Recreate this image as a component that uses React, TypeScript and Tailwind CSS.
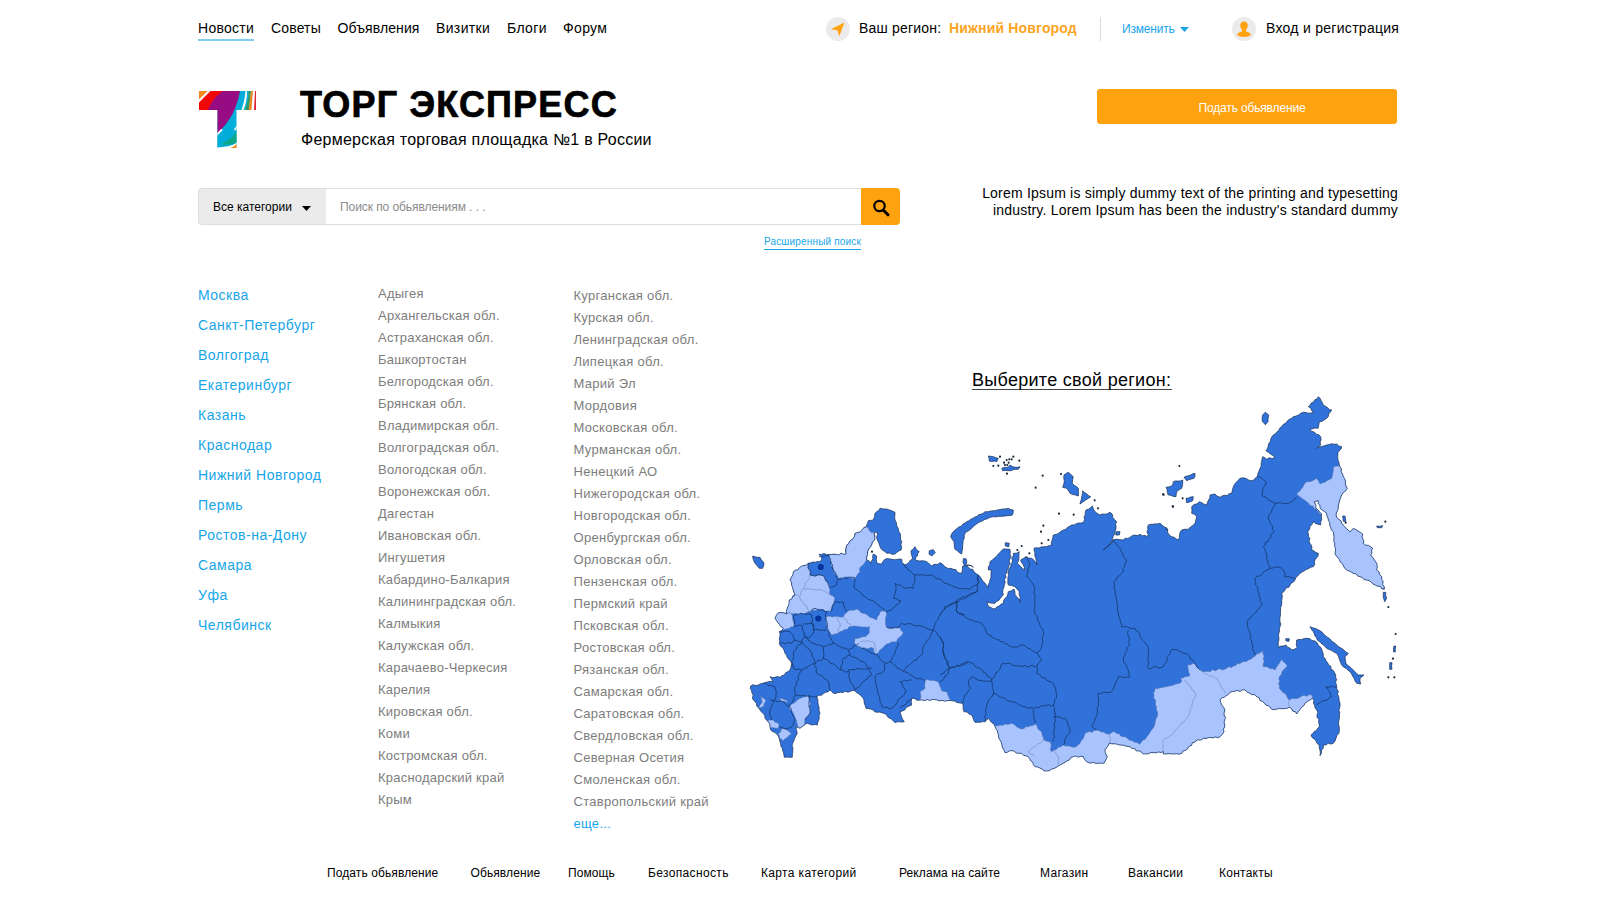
import React from "react";

type Tile = { x: number; y: number; s: number };

/* Map sheets: every outline is listed in the local units of its sheet. */
const TILES: Record<string, Tile> = {
  M: { x: 0, y: 0, s: 1 },
  W: { x: 740, y: 480, s: 1 / 3 },
  K: { x: 930, y: 350, s: 1 / 3 },
  N: { x: 1160, y: 380, s: 1 / 3 },
  S: { x: 940, y: 560, s: 1 / 3 },
  E: { x: 1160, y: 560, s: 1 / 3 },
};

type Pt = [number, number];

function parse(src: string): Pt[] {
  let tile = TILES.M;
  const out: Pt[] = [];
  for (const token of src.trim().split(/\s+/)) {
    if (TILES[token]) {
      tile = TILES[token];
      continue;
    }
    const [a, b] = token.split(",").map(Number);
    out.push([tile.x + a * tile.s, tile.y + b * tile.s]);
  }
  return out;
}

function noise(x: number, y: number) {
  const v = Math.sin(x * 12.9898 + y * 78.233) * 43758.5453;
  return (v - Math.floor(v)) * 2 - 1;
}

/* Splits long segments into short wiggly ones so that borders look natural. */
function wiggle(a: Pt, b: Pt, amp: number): Pt[] {
  const dx = b[0] - a[0];
  const dy = b[1] - a[1];
  const len = Math.hypot(dx, dy);
  const n = Math.floor(len / 2.3);
  const pts: Pt[] = [];
  for (let i = 1; i < n; i++) {
    const x = a[0] + (dx * i) / n;
    const y = a[1] + (dy * i) / n;
    const k = noise(Math.round(x), Math.round(y)) * amp;
    pts.push([x - (dy / len) * k, y + (dx / len) * k]);
  }
  pts.push(b);
  return pts;
}

function line(src: string, closed = false, amp = 0.95) {
  const pts = parse(src);
  if (closed) pts.push(pts[0]);
  const out: Pt[] = [pts[0]];
  for (let i = 1; i < pts.length; i++) out.push(...wiggle(pts[i - 1], pts[i], amp));
  return "M" + out.map((p) => p[0].toFixed(1) + " " + p[1].toFixed(1)).join("L") + (closed ? "Z" : "");
}

const MAINLAND = `W 237,223 318,222 320,195 340,175 345,160 362,155 378,140 385,122 400,120 405,100 420,85 440,87 465,97 465,120 475,145 485,185 483,210
465,222 440,220 422,205 412,180 410,155 403,160 404,180 395,195 383,215 380,240 393,250 400,222 410,228 410,248 425,252 435,238 485,238
492,255 518,237 513,212 525,200 538,215 525,240 560,245 575,258 600,248 612,258 640,268 665,280 668,258 685,255 700,262
S 80,15 115,45 145,82 150,60 155,30 K 175,660 180,635 205,612 220,597 240,598 243,620 232,660
S 200,30 192,80 190,105 165,130 140,125 145,140 165,147 190,130 205,95 222,87 230,110 240,128 238,95 225,80 205,75 205,40 213,12
K 245,640 250,610 268,605 262,640 285,660 272,630 290,620 305,625 322,645 312,595 340,590 365,585 370,555 400,540 425,525 462,515 468,480 487,468
495,485 510,495 540,487 560,515 555,545 542,580 520,600 555,568 580,570 605,558 630,553 652,560 655,525 690,520 712,540
N 18,442 28,465 55,480 65,450 85,448 105,430 110,410 95,400 95,380 118,365 140,375 150,345 165,342 180,352 215,340 220,320 240,295 260,296 275,302 292,290 300,265 308,230
320,238 345,232 318,212 340,165 365,140 400,110 430,97 462,97 445,80 475,50 490,75 515,90 500,115 478,125 474,145 450,148 482,170 482,195 470,205 500,195 530,192
545,200 533,225 540,260 550,290 562,325 545,345 535,385 528,405 545,430 570,455 580,445 608,462 610,490 638,505 632,525 650,550 650,570 665,590 673,628
600,590 560,570 525,520 522,470 500,400 480,385 475,362 463,365 468,385 485,402 482,435 460,425 443,455 455,510 475,520 460,560 420,580 405,600 365,640
E 360,200 355,262 378,255 395,270 412,262 410,240 440,235 465,243 482,262 490,290 527,345 530,380 540,430 537,520 520,550 490,555 480,587 478,555 453,525 478,500
470,450 458,415 435,430 410,462 388,442 335,448 290,410 255,390 210,397 180,420 195,450 192,515 180,530 110,540 65,580 10,582
S 670,575 610,582 570,560 508,550 495,570 502,590 492,610 445,608 430,590 400,590 355,618 320,633 285,620 265,590 215,572 195,578 180,540 165,500 148,475
135,485 105,487 95,465 72,455 68,430 W 635,662 540,660 515,655 515,675 480,695 493,725 465,728 440,705 378,685 372,660 345,632 280,640 270,630
230,650 235,675 240,700 232,735 200,730 180,745 168,740 172,760 158,790 157,832 133,832 120,785 115,768 92,750 85,725 60,690 40,660 32,618
70,610 100,605 90,590 120,592 150,570 155,550 135,520 118,490 118,455 130,445 105,415 115,398 140,402 148,360 165,345 150,300 160,275 205,250
240,245 245,232`;

const LIGHT = [
  "W 266,226 318,215 320,195 340,170 345,155 362,150 378,140 395,158 404,155 404,180 395,195 383,215 380,240 362,260 360,275 345,298 325,292 295,297 280,270",
  "W 205,250 210,285 250,287 268,315 272,345 285,355 272,395 235,388 212,395 190,402 140,402 120,370 165,345 130,300 160,260",
  "W 95,415 115,390 155,402 162,440 130,450",
  "W 257,412 285,408 310,410 325,392 350,387 370,400 410,420 420,395 438,395 437,425 440,442 480,443 490,458 470,485 440,492 420,510 408,523 400,505 365,505 343,488 345,475 375,470 388,458 388,440 360,440 335,440 300,455 275,465 262,440",
  "W 555,600 595,605 605,632 622,635 635,670 540,670 540,635 555,625",
  "W 148,680 180,655 205,645 210,665 210,700 195,720 195,750 175,750 165,715",
  "W 118,655 140,660 143,668 125,665",
  "W 80,722 100,720 118,735 115,745 85,745",
  "W 115,760 130,745 155,762 130,782 118,775",
  "W 60,645 78,662 70,680 52,686 66,668",
  `S 160,500 215,490 245,507 285,492 305,515 312,540 330,545 335,575 362,560 370,555 400,562 420,550 435,520 470,510 505,522 525,515 550,530 598,553 625,525
   645,490 652,455 640,400 645,385 700,375 725,365 722,355 750,345 742,315 760,310 E 130,335 200,325 265,300 310,272 310,320 345,330 365,298 382,318 358,350
   358,385 388,420 425,408 455,405 460,420 435,500 388,470 335,480 250,430 210,450 210,560 60,620 S 610,640 320,660 200,600 150,480`,
  "N 410,345 440,305 470,295 480,312 515,295 520,262 545,255 590,330 570,380 720,640 600,610 515,540 495,420 478,400 440,365",
];

const BORDERS = [
  "W 237,230 252,228 266,226",
  "W 266,226 280,270 295,297 290,315 272,322",
  "W 205,250 210,285 250,287 270,320",
  "W 295,297 325,292 345,293 342,320 375,350 415,375 435,390",
  "W 438,395 455,390 482,362 460,355 468,330 465,310 495,325 520,325 525,285 495,260 490,250",
  "W 525,285 570,285 640,320 690,328 715,310 S 115,45",
  "W 715,333 650,360 650,395 675,405",
  "W 650,365 615,380 585,430 580,450",
  "W 440,442 475,443 485,430 520,435 580,450 550,500 545,525 500,560 490,575",
  "W 580,450 610,485 612,520 628,560 625,580 600,605",
  "W 475,487 465,520 450,545",
  "W 272,395 285,365 310,365 320,395",
  "W 212,395 225,385 260,395 257,412 262,440 255,452 220,450 215,405 190,402 162,405 162,440",
  "W 118,455 150,455 165,480 185,485 195,470 185,435 165,440",
  "W 190,432 220,432 220,460 205,475 190,465",
  "W 120,490 155,490 165,480",
  "W 185,485 160,520 155,560",
  "W 185,485 215,520 228,550",
  "W 195,470 215,490 250,500 250,535 225,550",
  "W 262,450 275,480 280,490 250,500",
  "W 280,490 325,510 355,490",
  "W 325,510 330,525 310,535 300,570",
  "W 250,535 285,555 300,570 325,575",
  "W 330,525 370,545 395,580 375,600 345,630 330,600 325,570 395,565",
  "W 365,505 408,523 435,550 430,575 405,590 410,620 425,680 455,685 495,640 498,630 480,605 515,600",
  "W 435,550 450,545 490,575 520,590 555,602",
  "W 480,685 515,655",
  "W 155,550 160,565 185,570 225,550 230,580 265,605 270,630",
  "W 185,570 165,620 165,645 205,648 232,650",
  "W 70,610 105,620 108,650 90,690 95,720",
  "W 90,660 130,665 148,680 165,715 160,735 145,745 118,740",
  "W 165,645 148,680",
  "W 205,645 210,700 195,720",
  "W 628,565 680,550 S 85,305",
  "S 155,365 125,362 95,350 85,362 92,385 75,405 68,430",
  "S 0,165 20,140 50,125 110,95 112,75 115,45",
  "S 50,125 50,155 90,180 125,190 145,225 220,262 250,255 290,278",
  "K 285,620 300,640 290,680 S 262,50 285,85 282,150 310,215 305,260 290,278 305,300 290,318 290,340 340,370 350,405 340,435 345,475 340,545",
  "S 155,357 190,310 240,318 290,318",
  "S 0,345 30,325 85,305 120,325 155,357",
  "S 0,230 10,250 12,290 30,325",
  "S 155,357 160,400 215,425 262,445 340,435",
  "S 160,400 140,435 135,485",
  "S 280,448 285,490",
  "S 340,470 375,475 390,510 370,555",
  "K 550,568 590,630 575,670 S 545,40 522,65 530,130 545,200 585,205 625,265 625,325 670,320 695,268 740,280 780,330",
  "S 565,210 568,250 550,300 570,350 535,350 515,395 475,400 472,460 455,500 470,510",
  "N 292,290 318,305 305,345 345,370 385,370 410,350",
  "N 345,370 325,410 342,455 310,500 330,565 285,595 E 285,60 305,135 262,185 275,250 285,285",
  "N 330,565 350,560 370,570 375,590 405,595",
  "E 470,435 515,410 498,380 530,380",
];

const LIGHT_BORDERS = [
  "W 190,325 250,332 272,345",
  "W 165,345 178,350 210,395",
  "W 210,285 190,325 178,350",
  "W 285,408 300,430 295,455",
  "W 310,410 335,440",
  "W 360,485 400,485 408,515",
  "S 312,540 265,575 285,590",
  "S 340,570 355,590 355,615",
  "S 508,522 508,550",
  "S 735,360 768,405 745,470 700,520 670,540 670,575",
  "E 130,338 170,355 195,400",
  "E 388,420 388,442",
];

const ISLANDS = [
  "K 95,612 75,598 72,575 62,560 70,545 110,515 165,485 195,482 235,475 250,480 247,495 190,500 150,515 105,550 98,585",
  "K 402,375 415,367 430,380 427,400 445,415 445,438 420,430 410,415 398,412 402,400",
  "K 458,422 482,440 460,455 450,462 455,440",
  "K 558,545 570,545 568,555 557,555",
  "K 175,318 190,320 205,325 200,335 178,333",
  "K 215,355 235,352 240,345 255,352 270,350 265,358 235,362 218,362",
  "K 226,578 238,580 236,590 226,588",
  "W 38,228 50,232 60,232 72,250 68,265 58,265 45,250",
  "W 568,212 580,209 586,218 576,228 567,222",
  "W 670,236 678,236 680,250 675,258 669,248",
  "N 18,322 35,318 40,305 68,300 65,325 50,335 48,350 25,345",
  "N 72,292 105,280 102,295 80,302",
  "N 78,355 100,350 98,362 80,368",
  "N 308,105 316,97 326,105 324,125 316,134 307,124",
  "N 548,408 555,408 557,424 550,424",
  "N 650,438 668,437 665,443 652,443",
  "E 450,200 465,205 480,212 530,255 565,280 555,290 558,310 580,330 595,345 612,345 600,355 602,372 590,370 570,335 545,315 530,280 500,265 472,240 460,215",
  "E 670,97 677,97 680,115 674,125 670,112",
  "E 702,258 707,258 706,276 701,276",
  "E 689,308 696,308 696,328 689,328",
  "E 377,236 388,236 387,244 378,243",
];

const DOTS = `K 190,348 205,347 222,338 230,330 236,338 238,328 245,328 250,320 268,332 232,345 225,345 231,371 210,320 338,377 317,413 393,372 387,491 431,494
340,527 333,545 335,580 355,570 275,588 262,600 494,451 504,475 748,348 701,434 729,470 298,610
N 9,343 38,379 68,355 676,425 557,428 685,681 E 707,222 699,296 685,352 703,352 W 396,215`;

function RegionMap() {
  const land = line(MAINLAND, true, 0.85);
  return (
    <svg viewBox="740 390 670 390" className="h-[390px] w-[670px]" aria-label="Карта регионов">
      <defs>
        <clipPath id="land">
          <path d={land} />
        </clipPath>
      </defs>
      <path d={land} fill="#3072da" />
      <g clipPath="url(#land)">
        {LIGHT.map((d) => (
          <path key={d} d={line(d, true)} fill="#a9c3fe" stroke="#4b6da8" strokeWidth="0.6" />
        ))}
      </g>
      <g fill="none" stroke="#15366b" strokeWidth="0.8" strokeLinejoin="round">
        {BORDERS.map((d) => (
          <path key={d} d={line(d)} />
        ))}
      </g>
      <g fill="none" stroke="#7187b8" strokeWidth="0.6">
        {LIGHT_BORDERS.map((d) => (
          <path key={d} d={line(d)} />
        ))}
      </g>
      <path d={land} fill="none" stroke="#1c355f" strokeWidth="0.75" strokeLinejoin="round" />
      <g fill="#3072da" stroke="#1c355f" strokeWidth="0.75">
        {ISLANDS.map((d) => (
          <path key={d} d={line(d, true, 0.5)} />
        ))}
      </g>
      <g fill="#142234">
        {parse(DOTS).map(([x, y]) => (
          <circle key={x + "-" + y} cx={x} cy={y} r="1.05" />
        ))}
      </g>
      <circle cx="820.8" cy="567" r="3.1" fill="#06329b" />
      <circle cx="818.3" cy="618.5" r="3.1" fill="#06329b" />
    </svg>
  );
}

function Logo() {
  return (
    <svg viewBox="0 0 58 58" className="h-[58px] w-[58px]">
      <defs>
        <clipPath id="tee">
          <path d="M1 0H58V19H38.5V57H19.5V19H1Z" />
        </clipPath>
      </defs>
      <g clipPath="url(#tee)">
        <rect width="58" height="58" fill="#02add9" />
        <path d="M0 0H42C39 17 32 31 19 43V58H0Z" fill="#970b83" />
        <path d="M10 0H25C18 5 13 11 10 19H0V10Z" fill="#f00808" />
        <path d="M0 0H10L0 11Z" fill="#f28a1c" />
        <path d="M13 -2L-2 13" stroke="#fff" strokeWidth="2" />
        <path d="M19 43V58H30L27 35Z" fill="#02add9" />
        <path d="M19.5 42C22 40 24.500 37.500 27 34.500L29 37C26 39 23 41 19.500 44Z" fill="#02add9" />
        <path d="M18 44.500L24 38.500" stroke="#fff" strokeWidth="1.800" />
        <path d="M39 39C36 45 31 50 23 53C30 55 36 53 39 51Z" fill="#0aa889" />
        <path d="M19 56.500C27 56 34 55 39 51.500V58H19Z" fill="#fff" />
        <path d="M32 57C35 56 37 54.500 39 52.500V58H32Z" fill="#f28a1c" />
        <path d="M36.500 39L40 34" stroke="#fff" strokeWidth="1.500" />
        <path d="M47.500 0H58V19H43.500C45.500 13 47 7 47.500 0Z" fill="#fff" />
        <path d="M49 0H51C51 8 49 14 47 19H45.500C48 13 49 7 49 0Z" fill="#0bb0d4" />
        <path d="M50.500 0H53L51 19H47C49.500 12 50.500 7 50.500 0Z" fill="#279a63" />
        <path d="M53 0H55L53.500 19H50.500Z" fill="#e58a2a" />
        <path d="M57 0H58V19H56Z" fill="#df2338" />
      </g>
    </svg>
  );
}

const NAV = [
  { t: "Новости", w: "w-[73px] tracking-[0.28px]" },
  { t: "Советы", w: "w-[66.500px] tracking-[0.15px]" },
  { t: "Объявления", w: "w-[98.500px] tracking-[0.1px]" },
  { t: "Визитки", w: "w-[71px] tracking-[0.35px]" },
  { t: "Блоги", w: "w-[56px] tracking-[0.35px]" },
  { t: "Форум", w: "w-[60px] tracking-[0.35px]" },
];

const CITIES = [
  "Москва", "Санкт-Петербург", "Волгоград", "Екатеринбург", "Казань", "Краснодар",
  "Нижний Новгород", "Пермь", "Ростов-на-Дону", "Самара", "Уфа", "Челябинск",
];

const REGIONS_A = [
  "Адыгея", "Архангельская обл.", "Астраханская обл.", "Башкортостан", "Белгородская обл.",
  "Брянская обл.", "Владимирская обл.", "Волгоградская обл.", "Вологодская обл.",
  "Воронежская обл.", "Дагестан", "Ивановская обл.", "Ингушетия", "Кабардино-Балкария",
  "Калининградская обл.", "Калмыкия", "Калужская обл.", "Карачаево-Черкесия", "Карелия",
  "Кировская обл.", "Коми", "Костромская обл.", "Краснодарский край", "Крым",
];

const REGIONS_B = [
  "Курганская обл.", "Курская обл.", "Ленинградская обл.", "Липецкая обл.", "Марий Эл",
  "Мордовия", "Московская обл.", "Мурманская обл.", "Ненецкий АО", "Нижегородская обл.",
  "Новгородская обл.", "Оренбургская обл.", "Орловская обл.", "Пензенская обл.",
  "Пермский край", "Псковская обл.", "Ростовская обл.", "Рязанская обл.", "Самарская обл.",
  "Саратовская обл.", "Свердловская обл.", "Северная Осетия", "Смоленская обл.",
  "Ставропольский край",
];

const FOOTER = [
  { t: "Подать обьявление", w: "w-[143.500px]" },
  { t: "Обьявление", w: "w-[97.500px]" },
  { t: "Помощь", w: "w-[80px]" },
  { t: "Безопасность", w: "w-[113px] tracking-[0.35px]" },
  { t: "Карта категорий", w: "w-[138px] tracking-[0.35px]" },
  { t: "Реклама на сайте", w: "w-[141px]" },
  { t: "Магазин", w: "w-[88px] tracking-[0.3px]" },
  { t: "Вакансии", w: "w-[91px] tracking-[0.3px]" },
  { t: "Контакты", w: "w-[60px] tracking-[0.25px]" },
];

export default function App() {
  return (
    <div className="h-[900px] w-[1600px] overflow-hidden bg-white pl-[198px] font-['Liberation_Sans',Arial,sans-serif] text-black">
      <header className="flex h-[56px] items-start whitespace-nowrap pt-[17px] text-[14px] leading-[22px]">
        <nav className="flex w-[629px]">
          {NAV.map((n, i) => (
            <div key={n.t} className={n.w}>
              <a className={i === 0 ? "inline-block border-b-2 border-[#7fcdf0]" : "inline-block"}>{n.t}</a>
            </div>
          ))}
        </nav>
        <svg viewBox="0 0 24 24" className="-ml-px mr-px h-6 w-6">
          <circle cx="12" cy="12" r="12" fill="#ebebeb" />
          <path d="M18.500 5.500L13.200 19.500L11.500 13.200L4.800 12.200Z" fill="#fea210" />
        </svg>
        <span className="ml-2 w-[90px] tracking-[0.2px]">Ваш регион:</span>
        <span className="w-[151px] font-bold tracking-[0.16px] text-[#fba41f]">Нижний Новгород</span>
        <span className="h-6 w-px bg-[#dcdcdc]" />
        <span className="ml-[21px] w-[58px] text-[12px] leading-[24px] tracking-[-0.2px] text-[#18a5e8]">Изменить</span>
        <svg viewBox="0 0 9 5" className="mt-[10px] h-[5px] w-[9px]">
          <path d="M0 0H9L4.500 5Z" fill="#18a5e8" />
        </svg>
        <svg viewBox="0 0 24 24" className="ml-[43px] h-6 w-6">
          <circle cx="12" cy="12" r="12" fill="#ebebeb" />
          <path d="M12 4.500C14.600 4.500 15.900 6.200 15.800 8.500C15.700 10.500 14.800 11.800 14 12.800V14.500C16.500 15.200 18.600 16 19 18C16 20.600 8 20.600 5 18C5.400 16 7.500 15.200 10 14.500V12.800C9.200 11.800 8.300 10.500 8.200 8.500C8.100 6.200 9.400 4.500 12 4.500Z" fill="#fea210" />
        </svg>
        <span className="ml-[10px] tracking-[0.28px]">Вход и регистрация</span>
      </header>

      <section className="flex h-[132px] pt-[33px]">
        <div className="w-[102px] pt-[2px]">
          <Logo />
        </div>
        <div className="w-[797px] whitespace-nowrap pt-px">
          <h1 className="text-[36px] font-bold leading-[30px] tracking-[1.18px] [-webkit-text-stroke:0.7px_#000]">
            ТОРГ ЭКСПРЕСС
          </h1>
          <p className="ml-px mt-[10px] text-[16px] leading-[20px] tracking-[0.24px]">
            Фермерская торговая площадка №1 в России
          </p>
        </div>
        <button className="h-[35px] w-[300px] rounded-[3px] bg-[#fea210] pl-[10px] pt-[2px] text-[12px] tracking-[-0.16px] text-white">
          Подать обьявление
        </button>
      </section>

      <section className="flex h-[94px]">
        <div className="w-[702px]">
          <div className="flex h-[37px] text-[12px]">
            <div className="flex w-[128px] items-center rounded-l-[4px] border border-r-0 border-[#dedede] bg-[#ebebeb] pl-[14px]">
              <span className="w-[89px] whitespace-nowrap">Все категории</span>
              <svg viewBox="0 0 9 5" className="mt-[3px] h-[5px] w-[9px]">
                <path d="M0 0H9L4.500 5Z" fill="#000" />
              </svg>
            </div>
            <div className="flex flex-1 items-center border-y border-[#dedede] pl-[14px] tracking-[-0.07px] text-[#8b8b8b]">
              Поиск по обьявлениям . . .
            </div>
            <button className="flex w-[39px] items-center justify-center rounded-r-[4px] bg-[#fea210]">
              <svg viewBox="0 0 18 18" className="mt-[3px] h-[18px] w-[18px]" fill="none" stroke="#000">
                <circle cx="7.500" cy="7" r="5.200" strokeWidth="2.200" />
                <path d="M11.200 11L16 15.800" strokeWidth="3" strokeLinecap="round" />
              </svg>
            </button>
          </div>
          <div className="mr-[39px] mt-[9px] flex justify-end">
            <a className="border-b border-[#18a5e8] text-[10px] leading-[15px] tracking-[0.17px] text-[#18a5e8]">
              Расширенный поиск
            </a>
          </div>
        </div>
        <p className="-mt-[3px] w-[498px] whitespace-nowrap text-right text-[14px] leading-[17px] tracking-[0.2px]">
          Lorem Ipsum is simply dummy text of the printing and typesetting
          <br />
          industry. Lorem Ipsum has been the industry's standard dummy
        </p>
      </section>

      <main className="flex h-[583px] whitespace-nowrap">
        <ul className="-mt-[2px] w-[180px] text-[14px] leading-[30px] tracking-[0.5px] text-[#18a5e8]">
          {CITIES.map((c) => (
            <li key={c}>{c}</li>
          ))}
        </ul>
        <ul className="w-[195.500px] pt-px text-[13px] leading-[22px] tracking-[0.22px] text-[#7d7d7d]">
          {REGIONS_A.map((r) => (
            <li key={r}>{r}</li>
          ))}
        </ul>
        <ul className="w-[166.500px] pt-[3px] text-[13px] leading-[22px] tracking-[0.29px] text-[#7d7d7d]">
          {REGIONS_B.map((r) => (
            <li key={r}>{r}</li>
          ))}
          <li className="text-[#18a5e8]">еще...</li>
        </ul>
        <div className="pt-[87px]">
          <h2 className="ml-[232px] h-[21px] w-[200px] border-b border-[#444] text-[18px] leading-[22px] tracking-[0.29px]">
            Выберите свой регион:
          </h2>
          <RegionMap />
        </div>
      </main>

      <footer className="flex whitespace-nowrap pl-[129px] text-[12px] leading-[16px] tracking-[0.1px]">
        {FOOTER.map((f) => (
          <a key={f.t} className={f.w}>
            {f.t}
          </a>
        ))}
      </footer>
    </div>
  );
}
